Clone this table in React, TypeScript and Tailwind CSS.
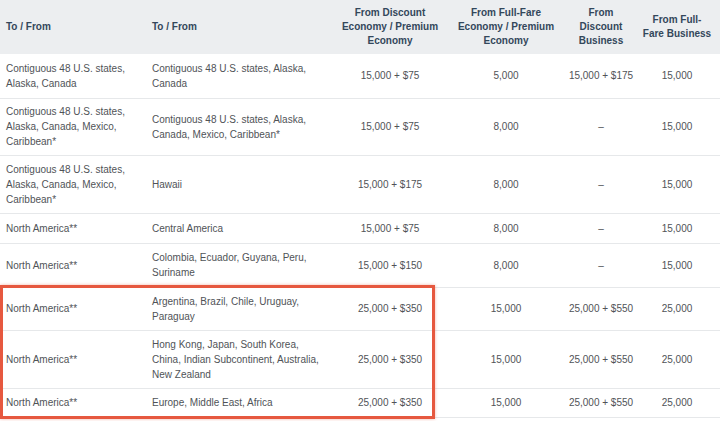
import React from 'react'

interface Row {
  from: string
  to: string
  discEcon: string
  fullEcon: string
  discBiz: string
  fullBiz: string
  h: string
}

const rows: Row[] = [
  { from: 'Contiguous 48 U.S. states, Alaska, Canada', to: 'Contiguous 48 U.S. states, Alaska, Canada', discEcon: '15,000 + $75', fullEcon: '5,000', discBiz: '15,000 + $175', fullBiz: '15,000', h: 'h-[44px]' },
  { from: 'Contiguous 48 U.S. states, Alaska, Canada, Mexico, Caribbean*', to: 'Contiguous 48 U.S. states, Alaska, Canada, Mexico, Caribbean*', discEcon: '15,000 + $75', fullEcon: '8,000', discBiz: '–', fullBiz: '15,000', h: 'h-[57px]' },
  { from: 'Contiguous 48 U.S. states, Alaska, Canada, Mexico, Caribbean*', to: 'Hawaii', discEcon: '15,000 + $175', fullEcon: '8,000', discBiz: '–', fullBiz: '15,000', h: 'h-[58px]' },
  { from: 'North America**', to: 'Central America', discEcon: '15,000 + $75', fullEcon: '8,000', discBiz: '–', fullBiz: '15,000', h: 'h-[30px]' },
  { from: 'North America**', to: 'Colombia, Ecuador, Guyana, Peru, Suriname', discEcon: '15,000 + $150', fullEcon: '8,000', discBiz: '–', fullBiz: '15,000', h: 'h-[44px]' },
  { from: 'North America**', to: 'Argentina, Brazil, Chile, Uruguay, Paraguay', discEcon: '25,000 + $350', fullEcon: '15,000', discBiz: '25,000 + $550', fullBiz: '25,000', h: 'h-[43px]' },
  { from: 'North America**', to: 'Hong Kong, Japan, South Korea, China, Indian Subcontinent, Australia, New Zealand', discEcon: '25,000 + $350', fullEcon: '15,000', discBiz: '25,000 + $550', fullBiz: '25,000', h: 'h-[58px]' },
  { from: 'North America**', to: 'Europe, Middle East, Africa', discEcon: '25,000 + $350', fullEcon: '15,000', discBiz: '25,000 + $550', fullBiz: '25,000', h: 'h-[29px]' },
]

export default function App() {
  return (
    <div className="relative w-[720px] h-[421px] overflow-hidden bg-white font-['Liberation_Sans',Arial,sans-serif] text-[10px]">
      <table className="w-[720px] table-fixed border-collapse">
        <colgroup>
          <col className="w-[146px]" />
          <col className="w-[190px]" />
          <col className="w-[108px]" />
          <col className="w-[124px]" />
          <col className="w-[66px]" />
          <col className="w-[86px]" />
        </colgroup>
        <thead>
          <tr className="h-[54px] bg-[#eceef0] text-[#33475b] font-bold leading-[14px]">
            <th className="px-[6px] text-left align-middle font-bold">To / From</th>
            <th className="px-[6px] text-left align-middle font-bold">To / From</th>
            <th className="px-0 text-center align-middle font-bold">
              From Discount<br />Economy / Premium<br />Economy
            </th>
            <th className="px-0 text-center align-middle font-bold">
              From Full-Fare<br />Economy / Premium<br />Economy
            </th>
            <th className="px-0 text-center align-middle font-bold">
              From<br />Discount<br />Business
            </th>
            <th className="px-0 text-center align-middle font-bold">
              From Full-<br />Fare Business
            </th>
          </tr>
        </thead>
        <tbody className="text-[#505357] leading-[15px]">
          {rows.map((r, i) => (
            <tr key={i} className={r.h}>
              <td className="px-[6px] py-0 text-left align-middle border-b border-[#e6e8ea]">{r.from}</td>
              <td className="px-[6px] py-0 text-left align-middle border-b border-[#e6e8ea]">{r.to}</td>
              <td className="px-0 text-center align-middle whitespace-nowrap border-b border-[#e6e8ea]">{r.discEcon}</td>
              <td className="px-0 text-center align-middle whitespace-nowrap border-b border-[#e6e8ea]">{r.fullEcon}</td>
              <td className="px-0 text-center align-middle whitespace-nowrap border-b border-[#e6e8ea]">{r.discBiz}</td>
              <td className="px-0 text-center align-middle whitespace-nowrap border-b border-[#e6e8ea]">{r.fullBiz}</td>
            </tr>
          ))}
        </tbody>
      </table>

      {/* highlight box drawn over the long-haul rows */}
      <div className="absolute left-0 top-[285px] w-[435px] h-[134px] border-[3px] border-[#e6583f] shadow-[0_0_3px_rgba(230,88,63,0.45)] pointer-events-none" />
    </div>
  )
}
